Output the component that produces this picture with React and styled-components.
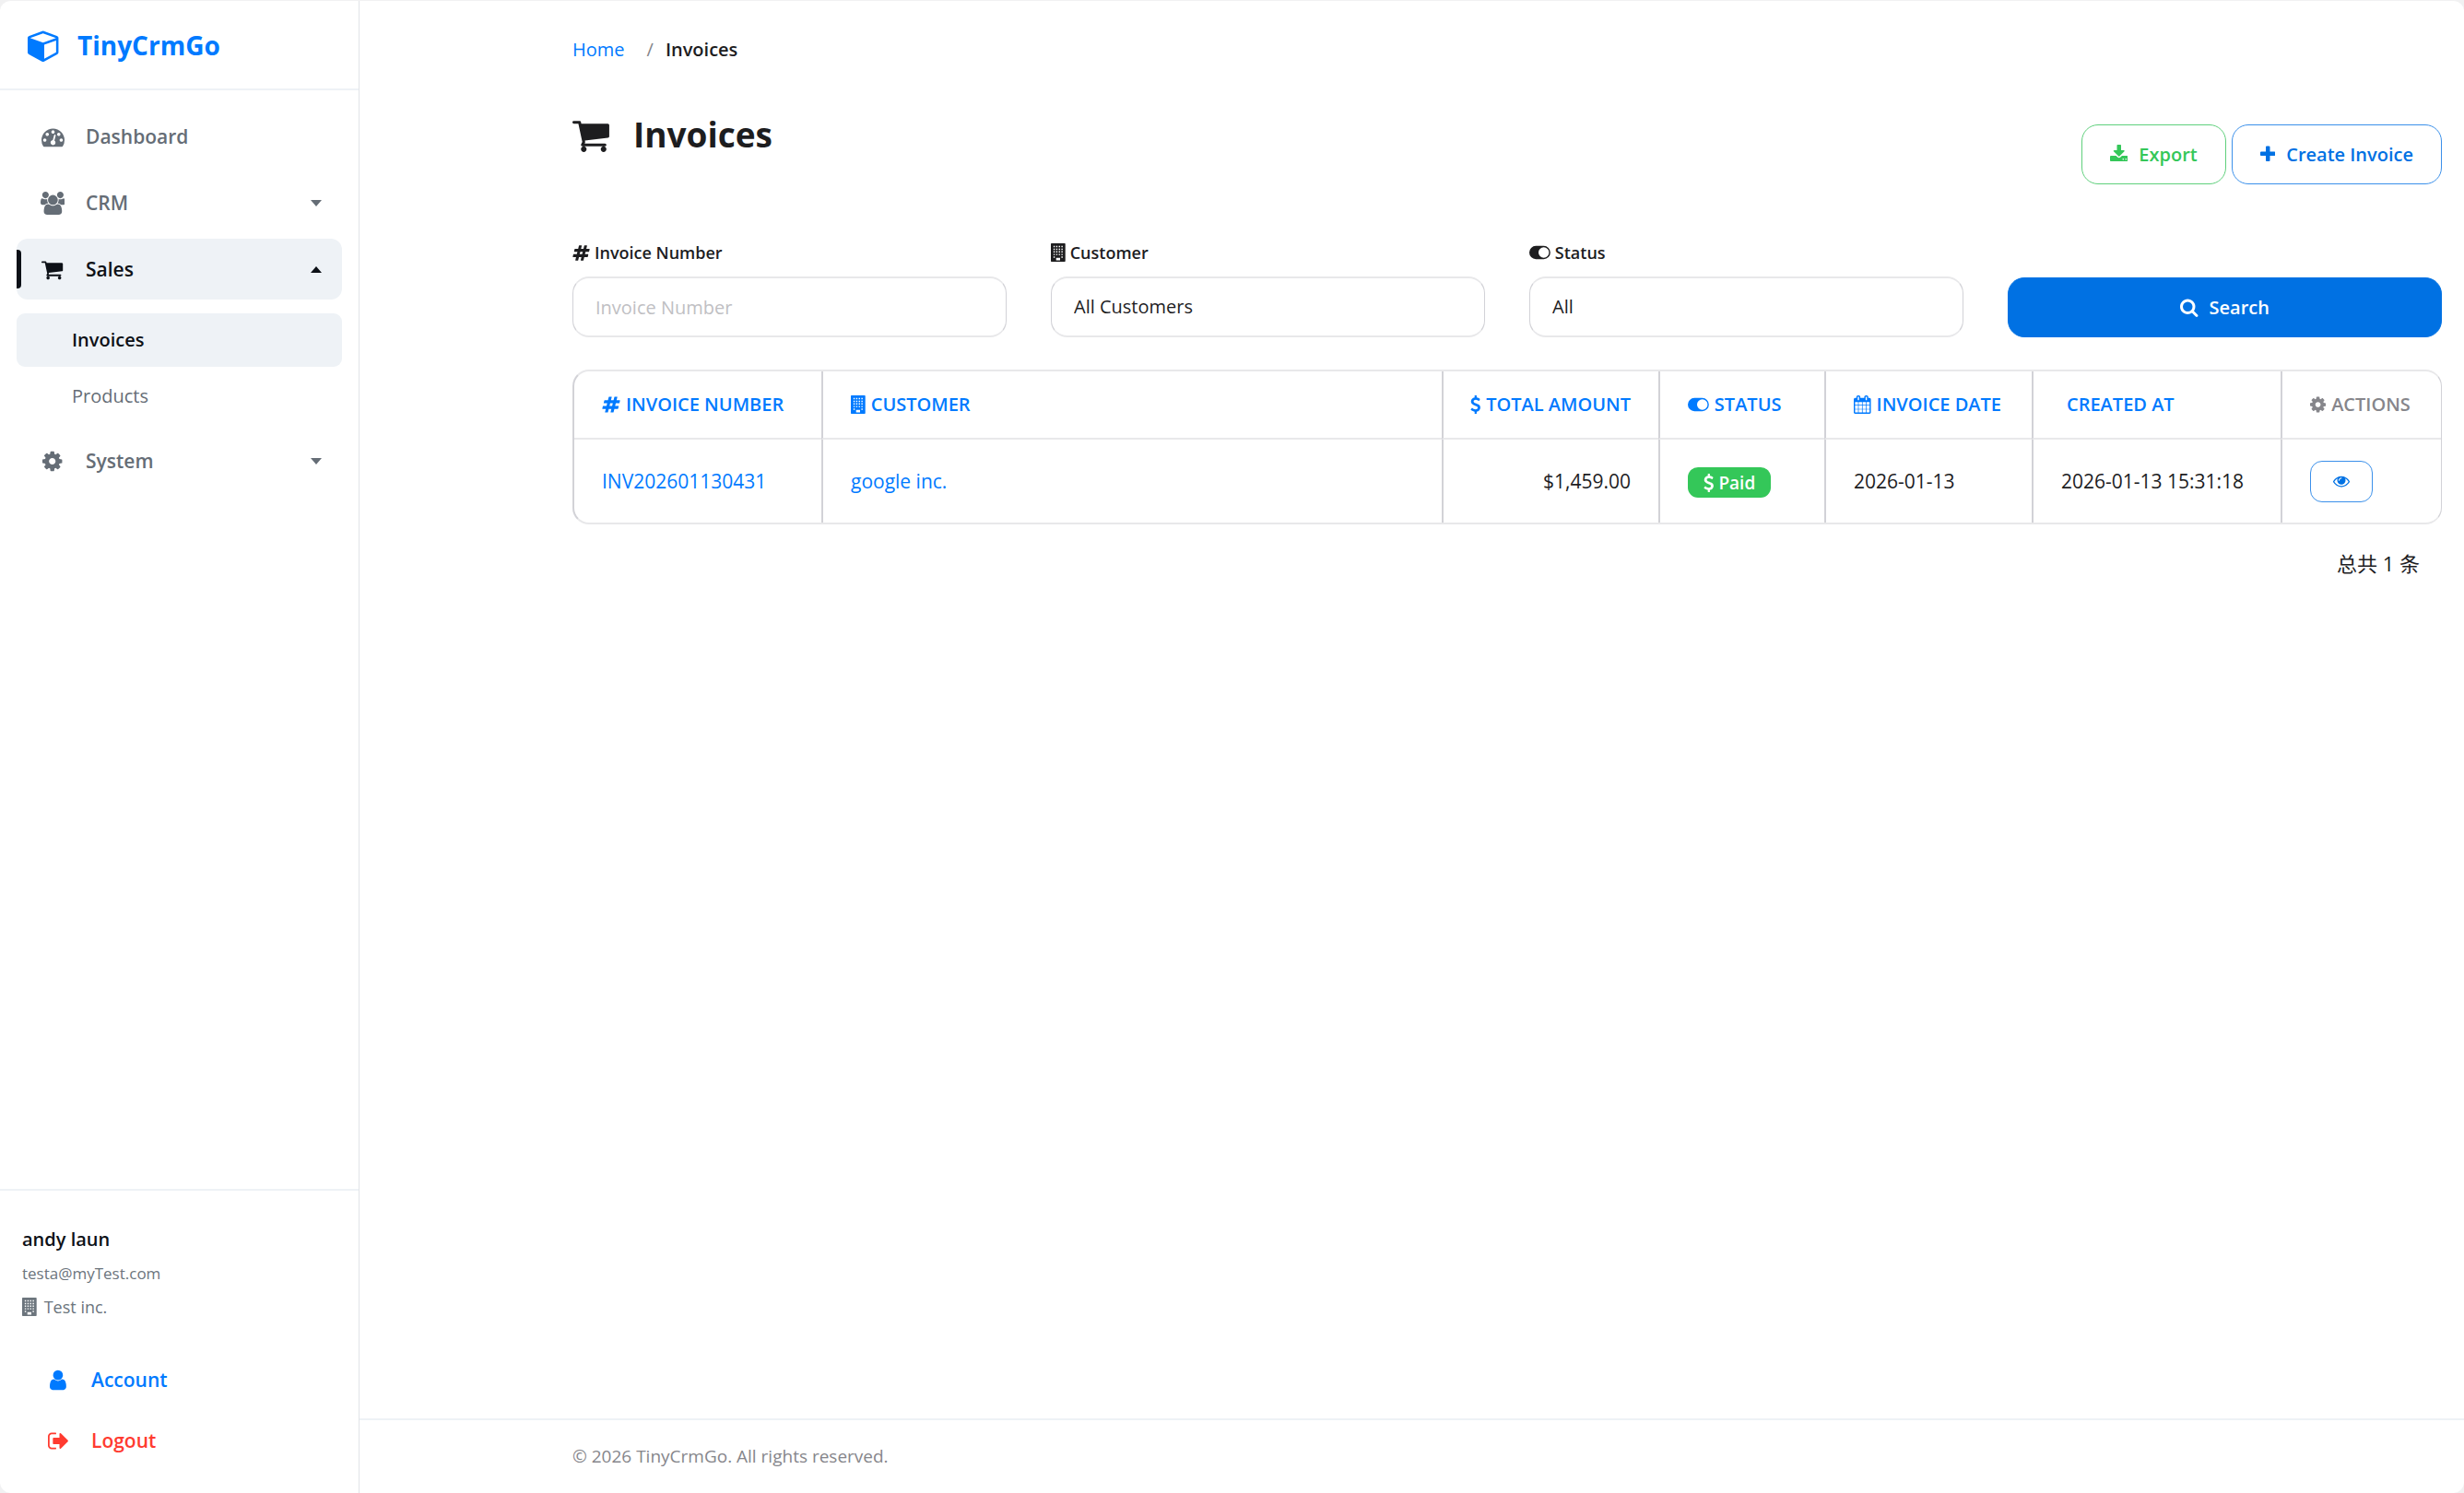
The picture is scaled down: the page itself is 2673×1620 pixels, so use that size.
import { useState } from "react";
import styled, { createGlobalStyle } from "styled-components";

const colors = {
  blue: "#007aff",
  buttonBlue: "#0071e3",
  green: "#34c759",
  red: "#ff3b30",
  text: "#1d1d1f",
  ink: "#0d1117",
  nav: "#656d76",
  muted: "#86868b",
  placeholder: "#c0c0c3",
  active: "#eef2f6",
  line: "#e8e8ea",
  lineDark: "#d2d2d7",
};

const GlobalStyle = createGlobalStyle`
  * {
    box-sizing: border-box;
  }
  body {
    margin: 0;
    background: #f1f1f2;
    color: ${colors.text};
    font-family: "Open Sans", "Noto Sans", "Noto Sans CJK SC", sans-serif;
    font-size: 21px;
    line-height: 32px;
  }
  a {
    color: inherit;
    text-decoration: none;
  }
  button, input, select {
    font: inherit;
    color: inherit;
  }
`;

/* ---------- icons, drawn on a grid 1792 units high ---------- */

const iconPaths = {
  cube: {
    box: "0 0 1792 1792",
    d: "M896 1629l640-349v-636l-640 233v752zm-64-865l698-254-698-254-698 254zm832-252v768q0 35-18 65t-49 47l-704 384q-28 16-61 16t-61-16l-704-384q-31-17-49-47t-18-65v-768q0-40 23-73t61-47l704-256q22-8 44-8t44 8l704 256q38 14 61 47t23 73z",
  },
  gauge: {
    box: "0 0 1792 1792",
    d: "M384 1152q0-53-37.5-90.5t-90.5-37.5-90.5 37.5-37.5 90.5 37.5 90.5 90.5 37.5 90.5-37.5 37.5-90.5zm192-448q0-53-37.5-90.5t-90.5-37.5-90.5 37.5-37.5 90.5 37.5 90.5 90.5 37.5 90.5-37.5 37.5-90.5zm428 481l101-382q6-26-7.5-48.5t-38.5-29.5-48 6.5-30 39.5l-101 382q-60 5-107 43.5t-63 98.5q-20 77 20 146t117 89 146-20 89-117q16-60-6-117t-72-91zm660-33q0-53-37.5-90.5t-90.5-37.5-90.5 37.5-37.5 90.5 37.5 90.5 90.5 37.5 90.5-37.5 37.5-90.5zm-640-640q0-53-37.5-90.5t-90.5-37.5-90.5 37.5-37.5 90.5 37.5 90.5 90.5 37.5 90.5-37.5 37.5-90.5zm448 192q0-53-37.5-90.5t-90.5-37.5-90.5 37.5-37.5 90.5 37.5 90.5 90.5 37.5 90.5-37.5 37.5-90.5zm320 448q0 261-141 483-19 29-54 29h-1402q-35 0-54-29-141-221-141-483 0-182 71-348t191-286 286-191 348-71 348 71 286 191 191 286 71 348z",
  },
  users: {
    box: "-64 0 1920 1792",
    d: "M529 896q-162 5-265 128h-134q-82 0-138-40.5t-56-118.5q0-353 124-353 6 0 43.5 21t97.5 42.5 119 21.5q67 0 133-23-5 37-5 66 0 139 81 256zm1071 637q0 120-73 189.5t-194 69.5h-874q-121 0-194-69.5t-73-189.5q0-53 3.5-103.5t14-109 26.5-108.5 43-97.5 62-81 85.5-53.5 111.5-20q10 0 43 21.5t73 48 107 48 135 21.5 135-21.5 107-48 73-48 43-21.5q61 0 111.5 20t85.5 53.5 62 81 43 97.5 26.5 108.5 14 109 3.5 103.5zm-1024-1277q0 106-75 181t-181 75-181-75-75-181 75-181 181-75 181 75 75 181zm704 384q0 159-112.5 271.5t-271.5 112.5-271.5-112.5-112.5-271.5 112.5-271.5 271.5-112.5 271.5 112.5 112.5 271.5zm576 225q0 78-56 118.5t-138 40.5h-134q-103-123-265-128 81-117 81-256 0-29-5-66 66 23 133 23 59 0 119-21.5t97.5-42.5 43.5-21q124 0 124 353zm-128-609q0 106-75 181t-181 75-181-75-75-181 75-181 181-75 181 75 75 181z",
  },
  cart: {
    box: "64 0 1664 1792",
    d: "M704 1536q0 52-38 90t-90 38-90-38-38-90 38-90 90-38 90 38 38 90zm896 0q0 52-38 90t-90 38-90-38-38-90 38-90 90-38 90 38 38 90zm128-1088v512q0 24-16.5 42.5t-40.5 21.5l-1044 122q13 60 13 70 0 16-24 64h920q26 0 45 19t19 45-19 45-45 19h-1024q-26 0-45-19t-19-45q0-11 8-31.5t16-36 21.5-40 15.5-29.5l-177-823h-204q-26 0-45-19t-19-45 19-45 45-19h256q16 0 28.5 6.5t19.5 15.5 13 24.5 8 26 5.5 29.5 4.5 26h1201q26 0 45 19t19 45z",
  },
  cog: {
    box: "128 0 1536 1792",
    d: "M1152 896q0-106-75-181t-181-75-181 75-75 181 75 181 181 75 181-75 75-181zm512-109v222q0 12-8 23t-20 13l-185 28q-19 54-39 91 35 50 107 138 10 12 10 25t-9 23q-27 37-99 108t-94 71q-12 0-26-9l-138-108q-44 23-91 38-16 136-29 186-7 28-36 28h-222q-14 0-24.5-8.5t-11.5-21.5l-28-184q-49-16-90-37l-141 107q-10 9-25 9-14 0-25-11-126-114-165-168-7-10-7-23 0-12 8-23 15-21 51-66.5t54-70.5q-27-50-41-99l-183-27q-13-2-21-12.5t-8-23.5v-222q0-12 8-23t19-13l186-28q14-46 39-92-40-57-107-138-10-12-10-24 0-10 9-23 26-36 98.5-107.5t94.5-71.5q13 0 26 10l138 107q44-23 91-38 16-136 29-186 7-28 36-28h222q14 0 24.5 8.5t11.5 21.5l28 184q49 16 90 37l142-107q9-9 24-9 13 0 25 10 129 119 165 170 7 8 7 22 0 12-8 23-15 21-51 66.5t-54 70.5q26 50 41 98l183 28q13 2 21 12.5t8 23.5z",
  },
  building: {
    box: "192 0 1408 1792",
    d: "M256 0h1280q64 0 64 64v1664q0 64-64 64h-1280q-64 0-64-64v-1664q0-64 64-64zM448 256v128h128v-128zM704 256v128h128v-128zM960 256v128h128v-128zM1216 256v128h128v-128zM448 512v128h128v-128zM704 512v128h128v-128zM960 512v128h128v-128zM1216 512v128h128v-128zM448 768v128h128v-128zM704 768v128h128v-128zM960 768v128h128v-128zM1216 768v128h128v-128zM448 1024v128h128v-128zM704 1024v128h128v-128zM960 1024v128h128v-128zM1216 1024v128h128v-128zM448 1280v128h128v-128zM1216 1280v128h128v-128zM704 1408v256h384v-256z",
  },
  user: {
    box: "256 0 1280 1792",
    d: "M1536 1399q0 109-62.5 187t-150.5 78h-854q-88 0-150.5-78t-62.5-187q0-85 8.5-160.5t31.5-152 58.5-131 94-89 134.5-34.5q131 128 313 128t313-128q76 0 134.5 34.5t94 89 58.5 131 31.5 152 8.5 160.5zm-256-887q0 159-112.5 271.5t-271.5 112.5-271.5-112.5-112.5-271.5 112.5-271.5 271.5-112.5 271.5 112.5 112.5 271.5z",
  },
  signOut: {
    box: "64 0 1600 1792",
    d: "M704 1440q0 4 1 20t.5 26.5-3 23.5-10 19.5-20.5 6.5h-320q-119 0-203.5-84.5t-84.5-203.5v-704q0-119 84.5-203.5t203.5-84.5h320q13 0 22.5 9.5t9.5 22.5q0 4 1 20t.5 26.5-3 23.5-10 19.5-20.5 6.5h-320q-66 0-113 47t-47 113v704q0 66 47 113t113 47h312l11.5 1 11.5 3 8 5.5 7 9 2 13.5zm928-544q0 26-19 45l-544 544q-19 19-45 19t-45-19-19-45v-288h-448q-26 0-45-19t-19-45v-384q0-26 19-45t45-19h448v-288q0-26 19-45t45-19 45 19l544 544q19 19 19 45z",
  },
  download: {
    box: "64 0 1664 1792",
    d: "M1344 1344q0-26-19-45t-45-19-45 19-19 45 19 45 45 19 45-19 19-45zm256 0q0-26-19-45t-45-19-45 19-19 45 19 45 45 19 45-19 19-45zm128-224v320q0 40-28 68t-68 28h-1472q-40 0-68-28t-28-68v-320q0-40 28-68t68-28h465l135 136q58 56 136 56t136-56l136-136h464q40 0 68 28t28 68zm-325-569q17 41-14 70l-448 448q-18 19-45 19t-45-19l-448-448q-31-29-14-70 17-39 59-39h256v-448q0-26 19-45t45-19h256q26 0 45 19t19 45v448h256q42 0 59 39z",
  },
  plus: {
    box: "192 0 1408 1792",
    d: "M1600 736v192q0 40-28 68t-68 28h-416v416q0 40-28 68t-68 28h-192q-40 0-68-28t-28-68v-416h-416q-40 0-68-28t-28-68v-192q0-40 28-68t68-28h416v-416q0-40 28-68t68-28h192q40 0 68 28t28 68v416h416q40 0 68 28t28 68z",
  },
  search: {
    box: "64 0 1664 1792",
    d: "M1216 832q0-185-131.5-316.5t-316.5-131.5-316.5 131.5-131.5 316.5 131.5 316.5 316.5 131.5 316.5-131.5 131.5-316.5zm512 832q0 52-38 90t-90 38q-54 0-90-38l-343-342q-179 124-399 124-143 0-273.5-55.5t-225-150-150-225-55.5-273.5 55.5-273.5 150-225 225-150 273.5-55.5 273.5 55.5 225 150 150 225 55.5 273.5q0 220-124 399l343 343q37 37 37 90z",
  },
  hashtag: {
    box: "0 0 1792 1792",
    d: "M991 1024l64-256h-254l-64 256h254zm768-504l-56 224q-7 24-31 24h-327l-64 256h311q15 0 25 12 10 14 6 28l-56 224q-5 24-31 24h-327l-81 328q-7 24-31 24h-224q-16 0-26-12-9-12-6-28l78-312h-254l-81 328q-7 24-31 24h-225q-15 0-25-12-9-12-6-28l78-312h-311q-15 0-25-12-9-12-6-28l56-224q7-24 31-24h327l64-256h-311q-15 0-25-12-10-14-6-28l56-224q5-24 31-24h327l81-328q7-24 32-24h224q15 0 25 12 9 12 6 28l-78 312h254l81-328q7-24 32-24h224q15 0 25 12 9 12 6 28l-78 312h311q15 0 25 12 9 12 6 28z",
  },
  toggle: {
    box: "0 0 2048 1792",
    d: "M640 256h768a640 640 0 0 1 0 1280h-768a640 640 0 0 1 0-1280zM1408 384a512 512 0 1 0 0 1024a512 512 0 1 0 0-1024z",
  },
  dollar: {
    box: "384 0 1024 1792",
    d: "M1362 1185q0 153-99.5 263.5t-258.5 136.5v175q0 14-9 23t-23 9h-135q-13 0-22.5-9.5t-9.5-22.5v-175q-66-9-127.5-31t-101.5-44.5-74-48-46.5-37.5-17.5-18q-17-21-2-41l103-135q7-10 23-12 15-2 24 9l2 2q113 99 243 125 37 8 74 8 81 0 142.5-43t61.5-122q0-28-15-53t-33.5-42-58.5-37.5-66-32-80-32.5q-39-16-61.5-25t-61.5-26.5-62.5-31-56.5-35.5-53.5-42.5-43.5-49-35.5-58-21-66.5-8.5-78q0-138 98-242t255-134v-180q0-13 9.5-22.5t22.5-9.5h135q14 0 23 9t9 23v176q57 6 110.5 23t87 33.5 63.5 37.5 39 29 15 14q17 18 5 38l-81 146q-8 15-23 16-14 3-27-7-3-3-14.5-12t-39-26.5-58.5-32-74.5-26-85.5-11.5q-95 0-155 43t-60 111q0 26 8.5 48t29.5 41.5 39.5 33 56 31 60.5 27 70 27.5q53 20 81 31.5t76 35 75.5 42.5 62 50 53 63.5 31.5 76.5 13 94z",
  },
  calendar: {
    box: "64 0 1664 1792",
    d: "M192 1664h288v-288h-288v288zm352 0h320v-288h-320v288zm-352-352h288v-320h-288v320zm352 0h320v-320h-320v320zm-352-384h288v-288h-288v288zm736 736h320v-288h-320v288zm-384-736h320v-288h-320v288zm768 736h288v-288h-288v288zm-384-352h320v-320h-320v320zm-352-864v-288q0-13-9.5-22.5t-22.5-9.5h-64q-13 0-22.5 9.5t-9.5 22.5v288q0 13 9.5 22.5t22.5 9.5h64q13 0 22.5-9.5t9.5-22.5zm736 864h288v-320h-288v320zm-384-384h320v-288h-320v288zm384 0h288v-288h-288v288zm32-480v-288q0-13-9.5-22.5t-22.5-9.5h-64q-13 0-22.5 9.5t-9.5 22.5v288q0 13 9.5 22.5t22.5 9.5h64q13 0 22.5-9.5t9.5-22.5zm384-64v1280q0 52-38 90t-90 38h-1408q-52 0-90-38t-38-90v-1280q0-52 38-90t90-38h128v-96q0-66 47-113t113-47h64q66 0 113 47t47 113v96h384v-96q0-66 47-113t113-47h64q66 0 113 47t47 113v96h128q52 0 90 38t38 90z",
  },
  eye: {
    box: "0 0 1792 1792",
    d: "M1664 960q-152-236-381-353 61 104 61 225 0 185-131.5 316.5t-316.5 131.5-316.5-131.5-131.5-316.5q0-121 61-225-229 117-381 353 133 205 333.5 326.5t434.5 121.5 434.5-121.5 333.5-326.5zm-720-384q0-20-14-34t-34-14q-125 0-214.5 89.5t-89.5 214.5q0 20 14 34t34 14 34-14 14-34q0-86 61-147t147-61q20 0 34-14t14-34zm848 384q0 34-20 69-140 230-376.5 368.5t-499.5 138.5-499.5-139-376.5-368q-20-35-20-69t20-69q140-229 376.5-368t499.5-139 499.5 139 376.5 368q20 35 20 69z",
  },
  caretDown: { box: "0 0 12 7", d: "M0 0h12l-6 7z" },
  caretUp: { box: "0 0 12 7", d: "M0 7h12l-6-7z" },
};

const IconSvg = styled.svg`
  flex: none;
  height: ${({ $size }) => $size}px;
  fill: currentColor;
  fill-rule: evenodd;
`;

const Icon = ({ name, size = 20 }) => {
  const { box, d } = iconPaths[name];
  return (
    <IconSvg viewBox={box} $size={size} aria-hidden="true">
      <path d={d} />
    </IconSvg>
  );
};

/* ---------- layout ---------- */

const Page = styled.div`
  min-height: 100vh;
  display: flex;
  border-top: 1px solid #f1f1f2;
  border-radius: 12px;
  background: #fff;
`;

const Sidebar = styled.aside`
  width: 390px;
  flex: none;
  display: flex;
  flex-direction: column;
  border-right: 1px solid #e1e4e8;
`;

const Brand = styled.a`
  height: 97px;
  padding: 0 30px;
  display: flex;
  align-items: center;
  gap: 18px;
  border-bottom: 2px solid ${colors.active};
  color: ${colors.blue};
  font-size: 28px;
  font-weight: 700;
`;

const Nav = styled.nav`
  flex: 1;
  padding: 17px 18px;
  display: flex;
  flex-direction: column;
  gap: 6px;
`;

const NavButton = styled.button`
  height: 66px;
  padding: 0 22px 0 26px;
  display: flex;
  align-items: center;
  border: 0;
  border-radius: 12px;
  background: ${({ $active }) => ($active ? colors.active : "transparent")};
  color: ${({ $active }) => ($active ? colors.ink : colors.nav)};
  font-size: 21px;
  font-weight: 600;
  text-align: left;
  position: relative;
  cursor: pointer;

  &::before {
    content: "";
    display: ${({ $active }) => ($active ? "block" : "none")};
    position: absolute;
    left: 0;
    top: 12px;
    bottom: 12px;
    width: 5px;
    border-radius: 0 4px 4px 0;
    background: ${colors.ink};
  }
`;

const IconSlot = styled.span`
  width: 26px;
  margin-right: 23px;
  display: flex;
  justify-content: center;
`;

const NavLabel = styled.span`
  flex: 1;
`;

const SubNav = styled.div`
  padding: 9px 0 2px;
  display: flex;
  flex-direction: column;
  gap: 3px;
`;

const SubLink = styled.a`
  height: 58px;
  padding-left: 60px;
  display: flex;
  align-items: center;
  border-radius: 9px;
  background: ${({ $active }) => ($active ? colors.active : "transparent")};
  color: ${({ $active }) => ($active ? colors.ink : colors.nav)};
  font-size: 20px;
  font-weight: ${({ $active }) => ($active ? 600 : 400)};
`;

const Profile = styled.div`
  padding: 37px 24px 24px;
  border-top: 2px solid ${colors.active};
  color: #6c757d;
  font-size: 18px;
`;

const ProfileName = styled.div`
  margin-bottom: 5px;
  color: ${colors.ink};
  font-size: 20px;
  font-weight: 600;
`;

const Email = styled.div`
  font-size: 17px;
`;

const Company = styled.div`
  margin: 4px 0 30px;
  display: flex;
  align-items: center;
  gap: 8px;
`;

const ProfileLink = styled.a`
  height: 66px;
  padding-left: 26px;
  display: flex;
  align-items: center;
  color: ${({ $danger }) => ($danger ? colors.red : colors.blue)};
  font-size: 21px;
  font-weight: 600;
`;

const Main = styled.main`
  flex: 1;
  min-width: 0;
  display: flex;
  flex-direction: column;
`;

const Content = styled.div`
  flex: 1;
  padding: 37px 24px 24px 231px;
`;

const Breadcrumb = styled.nav`
  display: flex;
  align-items: center;
  font-size: 20px;
  font-weight: 600;
`;

const CrumbLink = styled.a`
  margin-right: 24px;
  color: ${colors.blue};
  font-weight: 400;
`;

const CrumbSlash = styled.span`
  margin-right: 13px;
  color: ${colors.muted};
  font-weight: 400;
`;

const PageHeader = styled.header`
  margin-top: 50px;
  display: flex;
  justify-content: space-between;
`;

const Title = styled.h1`
  height: 52px;
  margin: 0;
  display: flex;
  align-items: center;
  gap: 26px;
  font-size: 37px;
  font-weight: 700;
`;

const Actions = styled.div`
  margin-top: 15px;
  display: flex;
  gap: 6px;
`;

const OutlineButton = styled.button`
  height: 65px;
  padding: 0 30px;
  display: flex;
  align-items: center;
  gap: 12px;
  border: 1px solid ${({ $line }) => $line};
  border-radius: 18px;
  background: #fff;
  color: ${({ $color }) => $color};
  font-size: 20px;
  font-weight: 600;
  cursor: pointer;
`;

const Filters = styled.form`
  margin: 58px 0 35px;
  display: grid;
  grid-template-columns: repeat(4, 1fr);
  align-items: end;
  column-gap: 48px;
`;

const FieldLabel = styled.label`
  margin-bottom: 10px;
  display: flex;
  align-items: center;
  gap: 5px;
  font-size: 18px;
  font-weight: 600;
`;

const fieldStyle = `
  width: 100%;
  height: 66px;
  padding: 0 24px;
  display: block;
  appearance: none;
  border: 2px solid ${colors.line};
  border-left: 1px solid ${colors.lineDark};
  border-right: 1px solid ${colors.lineDark};
  border-radius: 18px;
  background: #fff;
  font-size: 20px;
`;

const TextInput = styled.input`
  ${fieldStyle}
  &::placeholder {
    color: ${colors.placeholder};
    opacity: 1;
  }
`;

const Select = styled.select`
  ${fieldStyle}
`;

const SearchButton = styled.button`
  height: 65px;
  display: flex;
  align-items: center;
  justify-content: center;
  gap: 12px;
  border: 1px solid ${colors.buttonBlue};
  border-radius: 18px;
  background: ${colors.buttonBlue};
  color: #fff;
  font-size: 20px;
  font-weight: 600;
  cursor: pointer;
`;

const TableBox = styled.div`
  overflow: hidden;
  border: 2px solid ${colors.line};
  border-left-color: ${colors.lineDark};
  border-right: 1px solid ${colors.lineDark};
  border-radius: 18px;
`;

const Table = styled.table`
  width: 100%;
  border-collapse: separate;
  border-spacing: 0;
  table-layout: fixed;
`;

const HeadCell = styled.th`
  width: ${({ $width }) => ($width ? `${$width}px` : "auto")};
  height: 74px;
  padding: 0 30px;
  border-bottom: 2px solid ${colors.line};
  color: ${({ $muted }) => ($muted ? colors.muted : colors.blue)};
  font-size: 20px;
  font-weight: 600;
  white-space: nowrap;

  & + & {
    border-left: 2px solid ${colors.lineDark};
  }
`;

const HeadContent = styled.span`
  display: flex;
  align-items: center;
  justify-content: ${({ $end }) => ($end ? "flex-end" : "flex-start")};
  gap: 6px;
  text-transform: uppercase;
`;

const HeadText = styled.span`
  padding-left: ${({ $indent }) => ($indent ? 6 : 0)}px;
`;

const Cell = styled.td`
  height: 90px;
  padding: 0 30px;
  text-align: ${({ $end }) => ($end ? "right" : "left")};
  white-space: nowrap;

  & + & {
    border-left: 2px solid ${colors.lineDark};
  }
`;

const TableLink = styled.a`
  color: ${colors.blue};
`;

const Badge = styled.span`
  width: fit-content;
  height: 33px;
  margin-top: 3px;
  padding: 0 17px;
  display: flex;
  align-items: center;
  gap: 5px;
  border-radius: 11px;
  background: ${colors.green};
  color: #fff;
  font-size: 19px;
  font-weight: 600;
`;

const ViewButton = styled.button`
  width: 68px;
  height: 45px;
  display: flex;
  align-items: center;
  justify-content: center;
  border: 1px solid #3b90ea;
  border-radius: 13px;
  background: #fff;
  color: ${colors.buttonBlue};
  cursor: pointer;
`;

const Total = styled.p`
  margin: 26px 24px 0;
  font-size: 22px;
  text-align: right;
`;

const Footer = styled.footer`
  padding: 23px 24px 24px 231px;
  border-top: 2px solid ${colors.active};
  color: ${colors.muted};
  font-size: 19px;
`;

/* ---------- data ---------- */

const columns = [
  { label: "Invoice Number", icon: "hashtag", width: 268 },
  { label: "Customer", icon: "building" },
  { label: "Total Amount", icon: "dollar", width: 235, end: true },
  { label: "Status", icon: "toggle", width: 180 },
  { label: "Invoice Date", icon: "calendar", width: 225 },
  { label: "Created At", width: 270 },
  { label: "Actions", icon: "cog", width: 174, muted: true },
];

const invoices = [
  {
    number: "INV202601130431",
    customer: "google inc.",
    amount: "$1,459.00",
    status: "Paid",
    date: "2026-01-13",
    createdAt: "2026-01-13 15:31:18",
  },
];

const NavItem = ({ icon, size, label, open, active, onClick }) => (
  <NavButton type="button" $active={active} aria-expanded={open} onClick={onClick}>
    <IconSlot>
      <Icon name={icon} size={size} />
    </IconSlot>
    <NavLabel>{label}</NavLabel>
    {open !== undefined && <Icon name={open ? "caretUp" : "caretDown"} size={7} />}
  </NavButton>
);

const AppSidebar = () => {
  const [salesOpen, setSalesOpen] = useState(true);

  return (
    <Sidebar>
      <Brand href="#">
        <Icon name="cube" size={36} />
        TinyCrmGo
      </Brand>
      <Nav>
        <NavItem icon="gauge" size={25} label="Dashboard" />
        <NavItem icon="users" size={25} label="CRM" open={false} />
        <NavItem
          icon="cart"
          size={25}
          label="Sales"
          active
          open={salesOpen}
          onClick={() => setSalesOpen(!salesOpen)}
        />
        {salesOpen && (
          <SubNav>
            <SubLink href="#invoices" $active>
              Invoices
            </SubLink>
            <SubLink href="#products">Products</SubLink>
          </SubNav>
        )}
        <NavItem icon="cog" size={25} label="System" open={false} />
      </Nav>
      <Profile>
        <ProfileName>andy laun</ProfileName>
        <Email>testa@myTest.com</Email>
        <Company>
          <Icon name="building" size={20} />
          Test inc.
        </Company>
        <ProfileLink href="#account">
          <IconSlot>
            <Icon name="user" size={25} />
          </IconSlot>
          Account
        </ProfileLink>
        <ProfileLink href="#logout" $danger>
          <IconSlot>
            <Icon name="signOut" size={25} />
          </IconSlot>
          Logout
        </ProfileLink>
      </Profile>
    </Sidebar>
  );
};

const InvoiceFilters = () => (
  <Filters onSubmit={(e) => e.preventDefault()}>
    <div>
      <FieldLabel htmlFor="number">
        <Icon name="hashtag" size={19} />
        Invoice Number
      </FieldLabel>
      <TextInput id="number" placeholder="Invoice Number" />
    </div>
    <div>
      <FieldLabel htmlFor="customer">
        <Icon name="building" size={20} />
        Customer
      </FieldLabel>
      <Select id="customer">
        <option>All Customers</option>
        <option>google inc.</option>
      </Select>
    </div>
    <div>
      <FieldLabel htmlFor="status">
        <Icon name="toggle" size={20} />
        Status
      </FieldLabel>
      <Select id="status">
        <option>All</option>
        <option>Paid</option>
      </Select>
    </div>
    <SearchButton type="submit">
      <Icon name="search" size={21} />
      Search
    </SearchButton>
  </Filters>
);

const InvoiceTable = () => (
  <TableBox>
    <Table>
      <thead>
        <tr>
          {columns.map(({ label, icon, width, end, muted }) => (
            <HeadCell key={label} $width={width} $muted={muted}>
              <HeadContent $end={end}>
                {icon && <Icon name={icon} size={20} />}
                <HeadText $indent={!icon}>{label}</HeadText>
              </HeadContent>
            </HeadCell>
          ))}
        </tr>
      </thead>
      <tbody>
        {invoices.map((invoice) => (
          <tr key={invoice.number}>
            <Cell>
              <TableLink href="#invoice">{invoice.number}</TableLink>
            </Cell>
            <Cell>
              <TableLink href="#customer">{invoice.customer}</TableLink>
            </Cell>
            <Cell $end>{invoice.amount}</Cell>
            <Cell>
              <Badge>
                <Icon name="dollar" size={20} />
                {invoice.status}
              </Badge>
            </Cell>
            <Cell>{invoice.date}</Cell>
            <Cell>{invoice.createdAt}</Cell>
            <Cell>
              <ViewButton type="button" aria-label="View invoice">
                <Icon name="eye" size={18} />
              </ViewButton>
            </Cell>
          </tr>
        ))}
      </tbody>
    </Table>
  </TableBox>
);

const App = () => (
  <>
    <GlobalStyle />
    <Page>
      <AppSidebar />
      <Main>
        <Content>
          <Breadcrumb aria-label="Breadcrumb">
            <CrumbLink href="#">Home</CrumbLink>
            <CrumbSlash>/</CrumbSlash>
            <span>Invoices</span>
          </Breadcrumb>
          <PageHeader>
            <Title>
              <Icon name="cart" size={43} />
              Invoices
            </Title>
            <Actions>
              <OutlineButton type="button" $color={colors.green} $line="#5fd07c">
                <Icon name="download" size={21} />
                Export
              </OutlineButton>
              <OutlineButton type="button" $color={colors.buttonBlue} $line="#3b90ea">
                <Icon name="plus" size={21} />
                Create Invoice
              </OutlineButton>
            </Actions>
          </PageHeader>
          <InvoiceFilters />
          <InvoiceTable />
          <Total>总共 {invoices.length} 条</Total>
        </Content>
        <Footer>© 2026 TinyCrmGo. All rights reserved.</Footer>
      </Main>
    </Page>
  </>
);

export default App;
